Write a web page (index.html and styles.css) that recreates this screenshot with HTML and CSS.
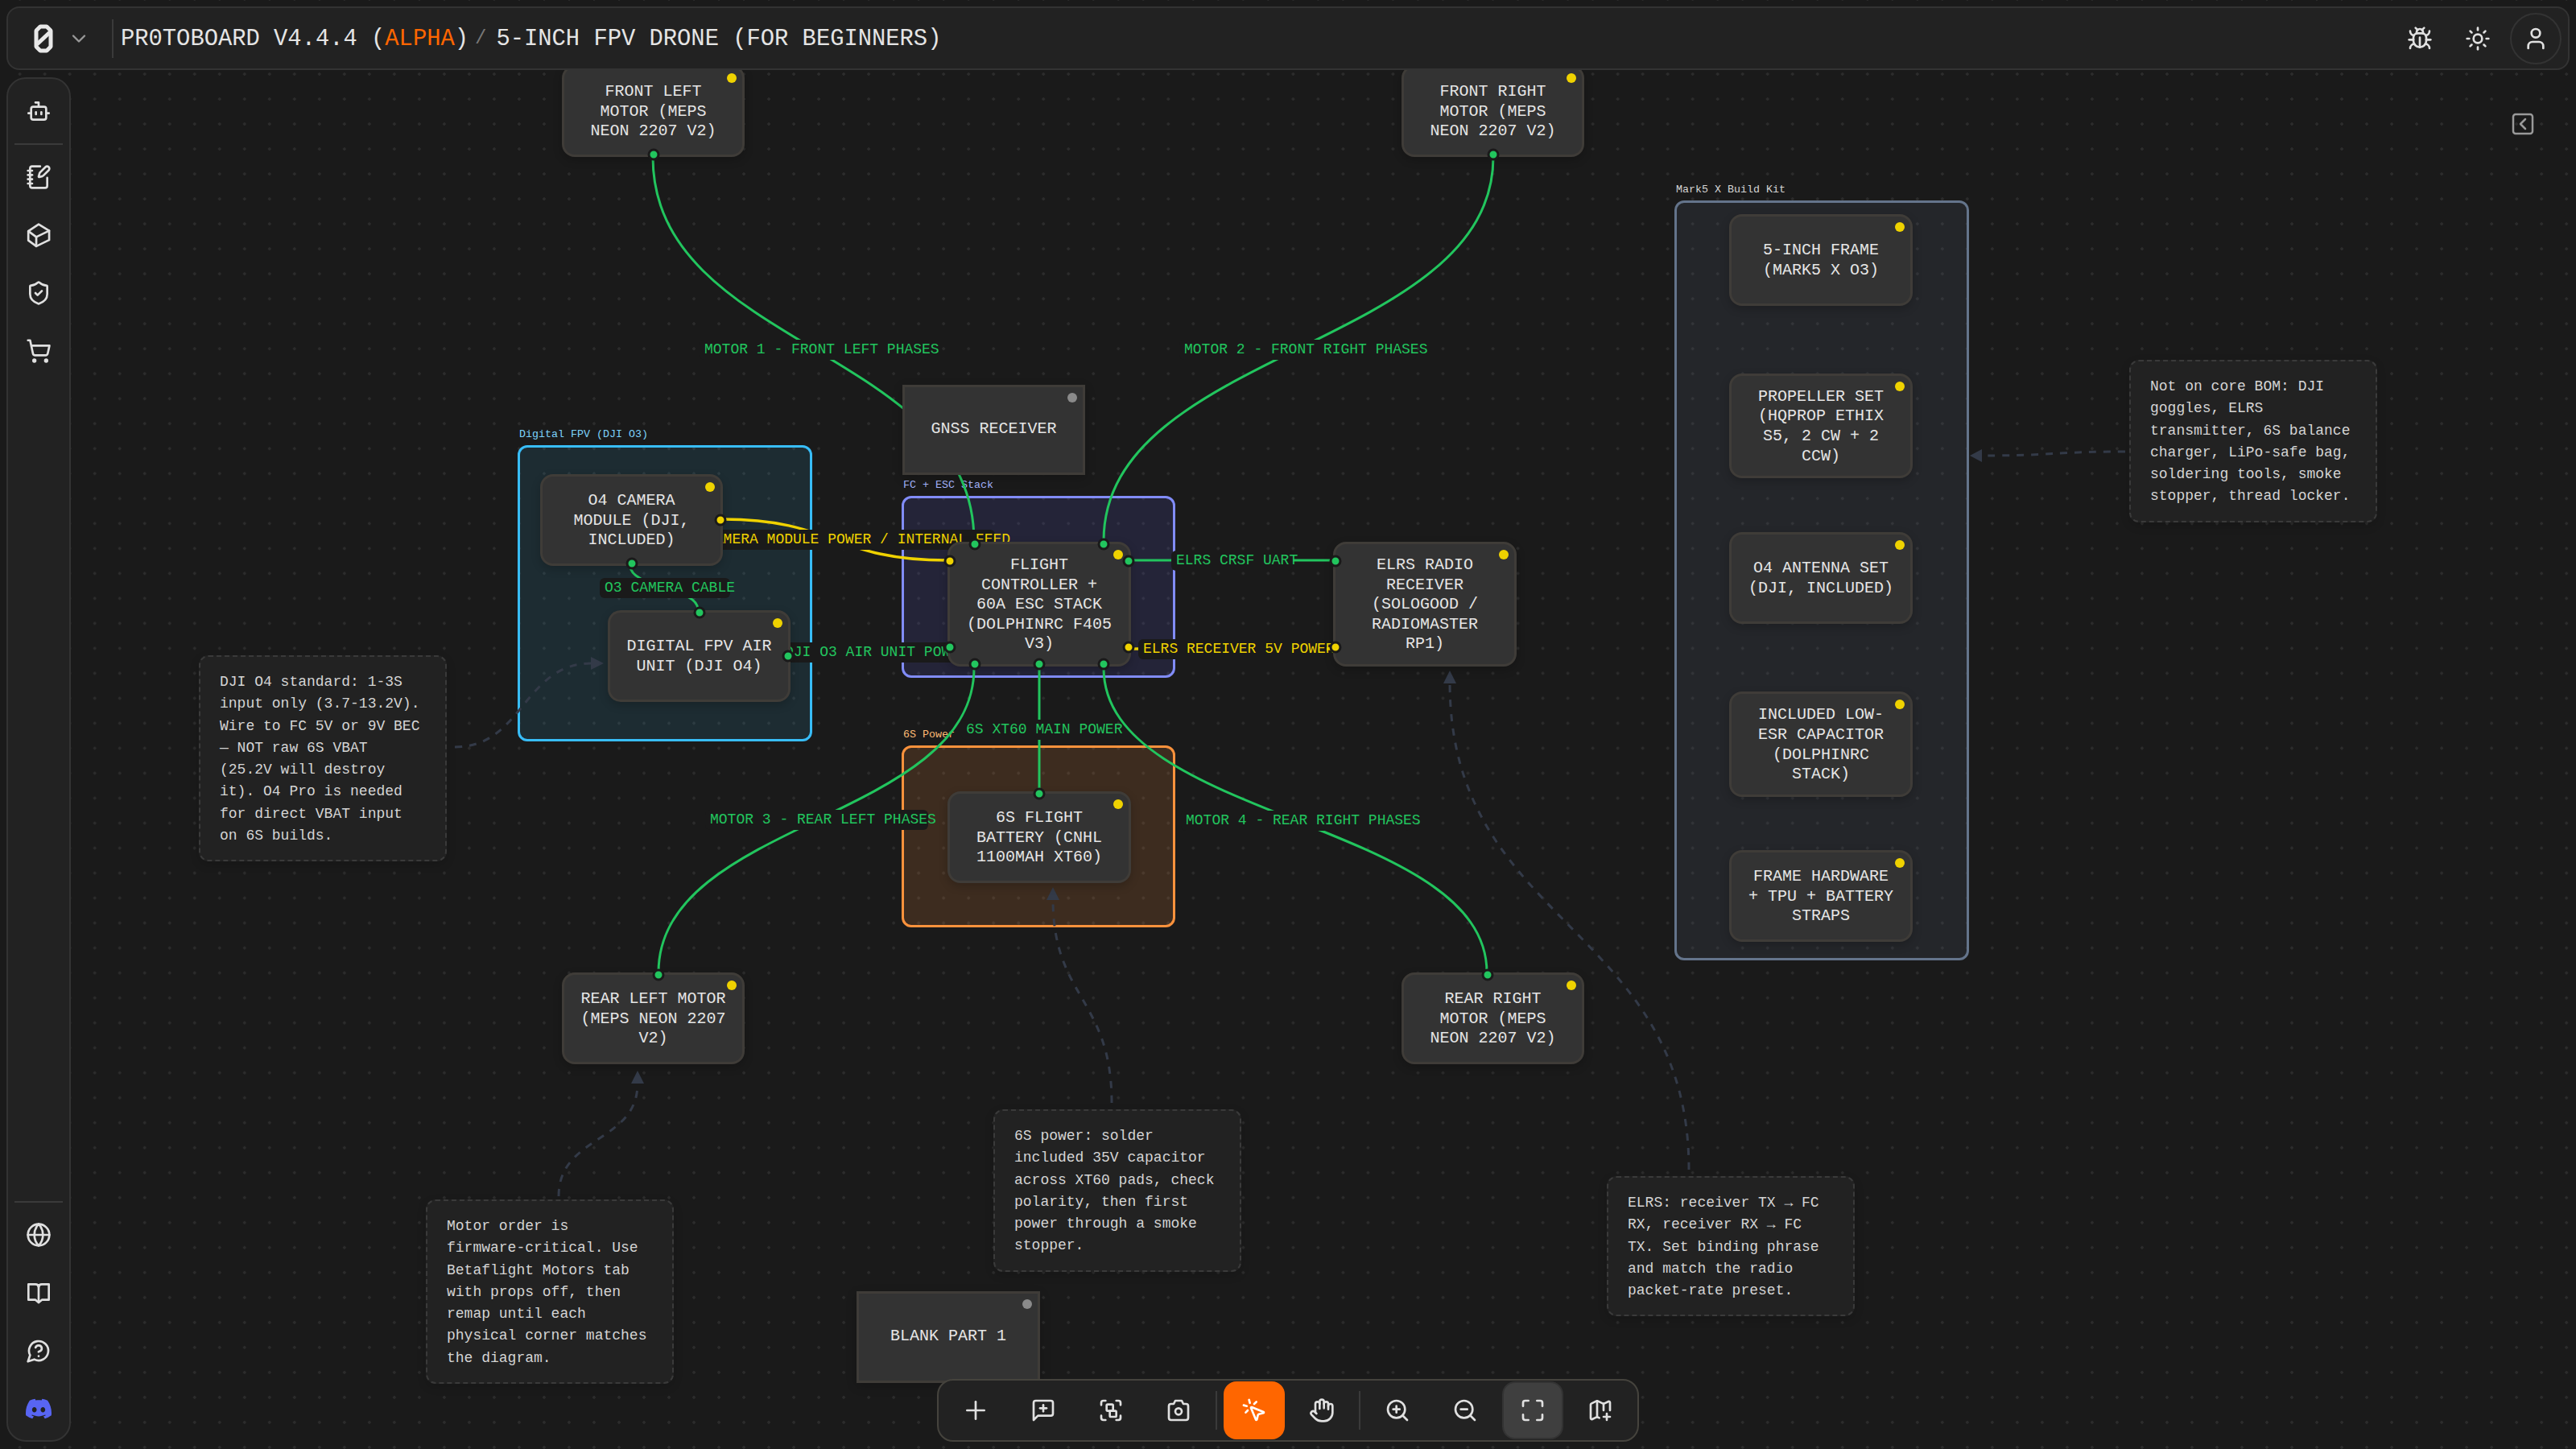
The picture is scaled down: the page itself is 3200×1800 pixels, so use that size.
FILE: index.html
```html
<!DOCTYPE html>
<html lang="en">
<head>
    <meta charset="UTF-8">
    <title>PR0TOBOARD - 5-inch FPV Drone</title>
    <link rel="stylesheet" href="styles.css">
</head>
<body>
<div class="app">
    <main class="canvas">
        <!-- groups -->
        <section class="group group-fpv"><span class="group-label">Digital FPV (DJI O3)</span></section>
        <section class="group group-fc"><span class="group-label">FC + ESC Stack</span></section>
        <section class="group group-power"><span class="group-label">6S Power</span></section>
        <section class="group group-kit"><span class="group-label">Mark5 X Build Kit</span></section>

        <!-- edges -->
        <svg class="edges" viewBox="0 0 3200 1800">
            <g class="edge-green">
                <path d="M811 195C811 433 1210 433 1210 672"/>
                <path d="M1855 195C1855 433 1371 433 1371 672"/>
                <path d="M1210 830C1210 1019 818 1019 818 1208"/>
                <path d="M1371 830C1371 1019 1847 1019 1847 1208"/>
                <path d="M1291 830V982"/>
                <path d="M783 703C783 730 867 730 867 757"/>
                <path d="M982 814C1080 814 1080 806 1177 806"/>
                <path d="M1405 696H1656"/>
            </g>
            <g class="edge-yellow">
                <path d="M898 645C1036 645 1036 696 1177 696"/>
                <path d="M1405 806H1656"/>
            </g>
            <g class="edge-note">
                <path d="M565 928C650 928 650 824 735 824"/>
                <path d="M2640 561C2550 561 2550 566 2462 566"/>
                <path d="M1381 1370C1381 1240 1308 1240 1308 1117"/>
                <path d="M694 1486C694 1410 792 1420 792 1346"/>
                <path d="M2098 1453C2098 1150 1801 1150 1801 848"/>
            </g>
            <g class="edge-arrow">
                <polygon points="750,824 734,816 734,832"/>
                <polygon points="2447,566 2462,558 2462,574"/>
                <polygon points="1308,1102 1300,1118 1316,1118"/>
                <polygon points="792,1330 784,1346 800,1346"/>
                <polygon points="1801,833 1793,849 1809,849"/>
            </g>
        </svg>

        <!-- edge labels -->
        <div class="edge-label green lbl-m1">MOTOR 1 - FRONT LEFT PHASES</div>
        <div class="edge-label green lbl-m2">MOTOR 2 - FRONT RIGHT PHASES</div>
        <div class="edge-label green lbl-m3">MOTOR 3 - REAR LEFT PHASES</div>
        <div class="edge-label green lbl-m4">MOTOR 4 - REAR RIGHT PHASES</div>
        <div class="edge-label green lbl-xt60">6S XT60 MAIN POWER</div>
        <div class="edge-label green lbl-crsf">ELRS CRSF UART</div>
        <div class="edge-label green lbl-cable">O3 CAMERA CABLE</div>
        <div class="edge-label green lbl-air">DJI O3 AIR UNIT POWER</div>
        <div class="edge-label yellow lbl-rx5v">ELRS RECEIVER 5V POWER</div>
        <div class="edge-label yellow lbl-cam">CAMERA MODULE POWER / INTERNAL FEED</div>

        <!-- nodes -->
        <div class="node n-fl"><span class="dot"></span>FRONT LEFT MOTOR (MEPS NEON 2207 V2)
            <i class="handle h-bottom"></i></div>
        <div class="node n-fr"><span class="dot"></span>FRONT RIGHT MOTOR (MEPS NEON 2207 V2)
            <i class="handle h-bottom"></i></div>
        <div class="node square n-gnss"><span class="dot off"></span>GNSS RECEIVER</div>
        <div class="node n-cam"><span class="dot"></span>O4 CAMERA MODULE (DJI, INCLUDED)
            <i class="handle h-right yellow"></i>
            <i class="handle h-bottom"></i></div>
        <div class="node n-air"><span class="dot"></span>DIGITAL FPV AIR UNIT (DJI O4)
            <i class="handle h-top"></i>
            <i class="handle h-right"></i></div>
        <div class="node n-fc"><span class="dot"></span>FLIGHT CONTROLLER + 60A ESC STACK (DOLPHINRC F405 V3)
            <i class="handle h-top at-x14"></i>
            <i class="handle h-top at-x86"></i>
            <i class="handle h-left at-y14 yellow"></i>
            <i class="handle h-left at-y86"></i>
            <i class="handle h-right at-y14"></i>
            <i class="handle h-right at-y86 yellow"></i>
            <i class="handle h-bottom at-x14"></i>
            <i class="handle h-bottom"></i>
            <i class="handle h-bottom at-x86"></i></div>
        <div class="node n-elrs"><span class="dot"></span>ELRS RADIO RECEIVER (SOLOGOOD / RADIOMASTER RP1)
            <i class="handle h-left at-y14"></i>
            <i class="handle h-left at-y86 yellow"></i></div>
        <div class="node n-batt"><span class="dot"></span>6S FLIGHT BATTERY (CNHL 1100MAH XT60)
            <i class="handle h-top"></i></div>
        <div class="node n-rl"><span class="dot"></span>REAR LEFT MOTOR (MEPS NEON 2207 V2)
            <i class="handle h-top at-x53"></i></div>
        <div class="node n-rr"><span class="dot"></span>REAR RIGHT MOTOR (MEPS NEON 2207 V2)
            <i class="handle h-top at-x47"></i></div>
        <div class="node square n-blank"><span class="dot off"></span>BLANK PART 1</div>

        <div class="node n-frame"><span class="dot"></span>5-INCH FRAME (MARK5 X O3)</div>
        <div class="node n-props"><span class="dot"></span>PROPELLER SET (HQPROP ETHIX S5, 2 CW + 2 CCW)</div>
        <div class="node n-ant"><span class="dot"></span>O4 ANTENNA SET (DJI, INCLUDED)</div>
        <div class="node n-cap"><span class="dot"></span>INCLUDED LOW-ESR CAPACITOR (DOLPHINRC STACK)</div>
        <div class="node n-hw"><span class="dot"></span>FRAME HARDWARE + TPU + BATTERY STRAPS</div>

        <!-- notes -->
        <div class="note note-o4">DJI O4 standard: 1-3S input only (3.7-13.2V). Wire to FC 5V or 9V BEC — NOT raw 6S VBAT (25.2V will destroy it). O4 Pro is needed for direct VBAT input on 6S builds.</div>
        <div class="note note-bom">Not on core BOM: DJI goggles, ELRS transmitter, 6S balance charger, LiPo-safe bag, soldering tools, smoke stopper, thread locker.</div>
        <div class="note note-motor">Motor order is firmware-critical. Use Betaflight Motors tab with props off, then remap until each physical corner matches the diagram.</div>
        <div class="note note-power">6S power: solder included 35V capacitor across XT60 pads, check polarity, then first power through a smoke stopper.</div>
        <div class="note note-elrs">ELRS: receiver TX → FC RX, receiver RX → FC TX. Set binding phrase and match the radio packet-rate preset.</div>
    </main>

    <div class="chrome">
        <header class="topbar">
            <svg class="logo" viewBox="0 0 24 36"><path d="M8 3h8l5 5v20l-5 5H8l-5-5V8z"/><path d="M4 25 20 10"/></svg>
            <svg class="icon chevron" viewBox="0 0 24 24"><path d="m6 9 6 6 6-6"/></svg>
            <span class="topbar-sep"></span>
            <span class="title">PR0TOBOARD V4.4.4 (<span class="alpha">ALPHA</span>)</span>
            <span class="crumb-slash">/</span>
            <span class="title">5-INCH FPV DRONE (FOR BEGINNERS)</span>
            <div class="topbar-actions">
                <button class="tool">
                    <svg class="icon" viewBox="0 0 24 24"><path d="m8 2 1.88 1.88"/><path d="M14.12 3.88 16 2"/><path d="M9 7.13v-1a3.003 3.003 0 1 1 6 0v1"/><path d="M12 20c-3.3 0-6-2.7-6-6v-3a4 4 0 0 1 4-4h4a4 4 0 0 1 4 4v3c0 3.3-2.7 6-6 6"/><path d="M12 20v-9"/><path d="M6.53 9C4.6 8.8 3 7.1 3 5"/><path d="M6 13H2"/><path d="M3 21c0-2.1 1.7-3.9 3.8-4"/><path d="M20.97 5c0 2.1-1.6 3.8-3.5 4"/><path d="M22 13h-4"/><path d="M17.2 17c2.1.1 3.8 1.9 3.8 4"/></svg>
                </button>
                <button class="tool">
                    <svg class="icon" viewBox="0 0 24 24"><circle cx="12" cy="12" r="4"/><path d="M12 2v2"/><path d="M12 20v2"/><path d="m4.93 4.93 1.41 1.41"/><path d="m17.66 17.66 1.41 1.41"/><path d="M2 12h2"/><path d="M20 12h2"/><path d="m6.34 17.66-1.41 1.41"/><path d="m19.07 4.93-1.41 1.41"/></svg>
                </button>
                <button class="tool avatar">
                    <svg class="icon" viewBox="0 0 24 24"><path d="M19 21v-2a4 4 0 0 0-4-4H9a4 4 0 0 0-4 4v2"/><circle cx="12" cy="7" r="4"/></svg>
                </button>
            </div>
        </header>

        <div class="stage">
            <nav class="sidebar">
                <button class="tool">
                    <svg class="icon" viewBox="0 0 24 24"><path d="M12 8V4H9"/><rect x="5" y="8" width="14" height="12" rx="2"/><path d="M2.5 14H5"/><path d="M19 14h2.5"/><path d="M9.5 13v2"/><path d="M14.5 13v2"/></svg>
                </button>
                <hr class="side-sep">
                <button class="tool">
                    <svg class="icon" viewBox="0 0 24 24"><path d="M13.4 2H6a2 2 0 0 0-2 2v16a2 2 0 0 0 2 2h12a2 2 0 0 0 2-2v-7.4"/><path d="M2 6h4"/><path d="M2 10h4"/><path d="M2 14h4"/><path d="M2 18h4"/><path d="M21.378 5.626a1 1 0 1 0-3.004-3.004l-5.01 5.012a2 2 0 0 0-.506.854l-.837 2.87a.5.5 0 0 0 .62.62l2.87-.837a2 2 0 0 0 .854-.506z"/></svg>
                </button>
                <button class="tool">
                    <svg class="icon" viewBox="0 0 24 24"><path d="M12 2 21.8 8v8.6L9.8 22.4 2.4 17V8.4z"/><path d="M2.4 8.4 9.8 13.8 21.8 8"/><path d="M9.8 13.8v8.6"/></svg>
                </button>
                <button class="tool">
                    <svg class="icon" viewBox="0 0 24 24"><path d="M20 13c0 5-3.5 7.5-7.66 8.95a1 1 0 0 1-.67-.01C7.5 20.5 4 18 4 13V6a1 1 0 0 1 1-1c2 0 4.5-1.2 6.24-2.72a1.17 1.17 0 0 1 1.52 0C14.51 3.81 17 5 19 5a1 1 0 0 1 1 1z"/><path d="m9 12 2 2 4-4"/></svg>
                </button>
                <button class="tool">
                    <svg class="icon" viewBox="0 0 24 24"><circle cx="8" cy="21" r="1"/><circle cx="19" cy="21" r="1"/><path d="M2.05 2.05h2l2.66 12.42a2 2 0 0 0 2 1.58h9.78a2 2 0 0 0 1.95-1.57l1.65-7.43H5.12"/></svg>
                </button>
                <hr class="side-sep side-sep-bottom">
                <button class="tool">
                    <svg class="icon" viewBox="0 0 24 24"><circle cx="12" cy="12" r="10"/><path d="M12 2a14.5 14.5 0 0 0 0 20 14.5 14.5 0 0 0 0-20"/><path d="M2 12h20"/></svg>
                </button>
                <button class="tool">
                    <svg class="icon" viewBox="0 0 24 24"><path d="M2.5 4H9a3 3 0 0 1 3 2.5A3 3 0 0 1 15 4h6.5v14.5H15L12 21l-3-2.5H2.5z"/><path d="M12 6.5V21"/></svg>
                </button>
                <button class="tool">
                    <svg class="icon" viewBox="0 0 24 24"><path d="M7.9 20A9 9 0 1 0 4 16.1L2 22Z"/><path d="M9.09 9a3 3 0 0 1 5.83 1c0 2-3 3-3 3"/><path d="M12 17h.01"/></svg>
                </button>
                <button class="tool">
                    <svg class="icon discord" viewBox="0 0 24 24"><path d="M20.317 4.3698a19.7913 19.7913 0 00-4.8851-1.5152.0741.0741 0 00-.0785.0371c-.211.3753-.4447.8648-.6083 1.2495-1.8447-.2762-3.68-.2762-5.4868 0-.1636-.3933-.4058-.8742-.6177-1.2495a.077.077 0 00-.0785-.037 19.7363 19.7363 0 00-4.8852 1.515.0699.0699 0 00-.0321.0277C.5334 9.0458-.319 13.5799.0992 18.0578a.0824.0824 0 00.0312.0561c2.0528 1.5076 4.0413 2.4228 5.9929 3.0294a.0777.0777 0 00.0842-.0276c.4616-.6304.8731-1.2952 1.226-1.9942a.076.076 0 00-.0416-.1057c-.6528-.2476-1.2743-.5495-1.8722-.8923a.077.077 0 01-.0076-.1277c.1258-.0943.2517-.1923.3718-.2914a.0743.0743 0 01.0776-.0105c3.9278 1.7933 8.18 1.7933 12.0614 0a.0739.0739 0 01.0785.0095c.1202.099.246.1981.3728.2924a.077.077 0 01-.0066.1276 12.2986 12.2986 0 01-1.873.8914.0766.0766 0 00-.0407.1067c.3604.698.7719 1.3628 1.225 1.9932a.076.076 0 00.0842.0286c1.961-.6067 3.9495-1.5219 6.0023-3.0294a.077.077 0 00.0313-.0552c.5004-5.177-.8382-9.6739-3.5485-13.6604a.061.061 0 00-.0312-.0286zM8.02 15.3312c-1.1825 0-2.1569-1.0857-2.1569-2.419 0-1.3332.9555-2.4189 2.157-2.4189 1.2108 0 2.1757 1.0952 2.1568 2.419 0 1.3332-.9555 2.4189-2.1569 2.4189zm7.9748 0c-1.1825 0-2.1569-1.0857-2.1569-2.419 0-1.3332.9554-2.4189 2.1569-2.4189 1.2108 0 2.1757 1.0952 2.1568 2.419 0 1.3332-.946 2.4189-2.1568 2.4189Z"/></svg>
                </button>
            </nav>
            <button class="collapse">
                <svg viewBox="0 0 28 28"><rect x="2" y="2" width="24" height="24" rx="3"/><path d="m17 8-6 6 6 6"/></svg>
            </button>
        </div>
    </div>

    <div class="toolbar">
        <button class="tool">
            <svg class="icon" viewBox="0 0 24 24"><path d="M12 4v16"/><path d="M4 12h16"/></svg>
        </button>
        <button class="tool">
            <svg class="icon" viewBox="0 0 24 24"><path d="M21 15a2 2 0 0 1-2 2H7l-4 4V5a2 2 0 0 1 2-2h14a2 2 0 0 1 2 2z"/><path d="M12 7v6"/><path d="M9 10h6"/></svg>
        </button>
        <button class="tool">
            <svg class="icon" viewBox="0 0 24 24"><path d="M7 3H5a2 2 0 0 0-2 2v2"/><path d="M17 3h2a2 2 0 0 1 2 2v2"/><path d="M7 21H5a2 2 0 0 1-2-2v-2"/><path d="M17 21h2a2 2 0 0 0 2-2v-2"/><rect x="8" y="6.5" width="6" height="6" rx="1"/><rect x="11" y="12.5" width="6" height="5.5" rx="1"/></svg>
        </button>
        <button class="tool">
            <svg class="icon" viewBox="0 0 24 24"><path d="M15 3H9L7.5 6H5a2 2 0 0 0-2 2v11a2 2 0 0 0 2 2h14a2 2 0 0 0 2-2V8a2 2 0 0 0-2-2h-2.500z"/><circle cx="12" cy="13" r="3"/></svg>
        </button>
        <span class="tool-sep"></span>
        <button class="tool active">
            <svg class="icon" viewBox="0 0 24 24"><path d="M14 4.100 12 6"/><path d="m5.100 8-2.900-.8"/><path d="m6 12-1.900 2"/><path d="M7.200 2.200 8 5.100"/><path d="M9.037 9.690a.498.498 0 0 1 .653-.653l11 4.500a.5.5 0 0 1-.074.949l-4.349 1.041a1 1 0 0 0-.74.739l-1.040 4.350a.5.5 0 0 1-.95.074z"/></svg>
        </button>
        <button class="tool">
            <svg class="icon" viewBox="0 0 24 24"><path d="M18 11V6a2 2 0 0 0-2-2 2 2 0 0 0-2 2"/><path d="M14 10V4a2 2 0 0 0-2-2 2 2 0 0 0-2 2v2"/><path d="M10 10.500V6a2 2 0 0 0-2-2 2 2 0 0 0-2 2v8"/><path d="M18 8a2 2 0 1 1 4 0v6a8 8 0 0 1-8 8h-2c-2.800 0-4.500-.86-5.990-2.340l-3.600-3.600a2 2 0 0 1 2.830-2.820L7 15"/></svg>
        </button>
        <span class="tool-sep"></span>
        <button class="tool">
            <svg class="icon" viewBox="0 0 24 24"><circle cx="11" cy="11" r="8"/><path d="m21 21-4.300-4.300"/><path d="M11 8v6"/><path d="M8 11h6"/></svg>
        </button>
        <button class="tool">
            <svg class="icon" viewBox="0 0 24 24"><circle cx="11" cy="11" r="8"/><path d="m21 21-4.300-4.300"/><path d="M8 11h6"/></svg>
        </button>
        <button class="tool selected">
            <svg class="icon" viewBox="0 0 24 24"><path d="M8 3H5a2 2 0 0 0-2 2v3"/><path d="M21 8V5a2 2 0 0 0-2-2h-3"/><path d="M3 16v3a2 2 0 0 0 2 2h3"/><path d="M16 21h3a2 2 0 0 0 2-2v-3"/></svg>
        </button>
        <button class="tool">
            <svg class="icon" viewBox="0 0 24 24"><path d="m11 19-1.106-.552a2 2 0 0 0-1.788 0l-3.659 1.830A1 1 0 0 1 3 19.381V6.618a1 1 0 0 1 .553-.894l4.553-2.277a2 2 0 0 1 1.788 0l4.212 2.106a2 2 0 0 0 1.788 0l3.659-1.830A1 1 0 0 1 21 4.619V12"/><path d="M15 5.764V12"/><path d="M18 15v6"/><path d="M21 18h-6"/><path d="M9 3.236v15"/></svg>
        </button>
    </div>
</div>
</body>
</html>
```

FILE: styles.css
```css
* {
    box-sizing: border-box;
}

body {
    margin: 0;
    overflow: hidden;
    background-color: #1a1a1a;
    font-family: "Liberation Mono", monospace;
    color: #e5e5e5;
}

button {
    padding: 0;
    border: none;
    background: none;
    color: inherit;
    font: inherit;
}

.app {
    position: relative;
    width: 3200px;
    height: 1800px;
    overflow: hidden;
}

/* icons */
.icon {
    width: 32px;
    height: 32px;
    fill: none;
    stroke: #e0e0e0;
    stroke-width: 2;
    stroke-linecap: round;
    stroke-linejoin: round;
}

.icon.discord {
    fill: #5865f2;
    stroke: none;
}

.tool {
    display: flex;
    flex: none;
    align-items: center;
    justify-content: center;
    width: 64px;
    height: 64px;
    border-radius: 16px;
}

/* canvas */
.canvas {
    position: absolute;
    inset: 0;
    background-color: #1a1a1a;
    background-image: radial-gradient(circle, #2c2c2c 1.5px, transparent 2px);
    background-size: 31.017px 31.017px;
    background-position: 9.1px 14.5px;
}

.edges {
    position: absolute;
    inset: 0;
    z-index: 2;
    width: 3200px;
    height: 1800px;
    fill: none;
}

.edge-green {
    stroke: #22c55e;
    stroke-width: 3;
}

.edge-yellow {
    stroke: #efd200;
    stroke-width: 3.5;
}

.edge-note {
    stroke: #333a48;
    stroke-width: 3;
    stroke-dasharray: 9 9;
}

.edge-arrow {
    fill: #333a48;
}

/* groups */
.group {
    position: absolute;
    z-index: 1;
    border: 3px solid;
    border-radius: 12px;
}

.group-label {
    position: absolute;
    top: -25px;
    left: -1px;
    font-size: 13.33px;
    line-height: 18px;
    white-space: nowrap;
}

.group-fpv {
    left: 643px;
    top: 553px;
    width: 366px;
    height: 368px;
    border-color: #38bdf8;
    background-color: rgba(56, 189, 248, 0.11);
}

.group-fpv .group-label {
    color: #7dd3fc;
}

.group-fc {
    left: 1120px;
    top: 616px;
    width: 340px;
    height: 226px;
    border-color: #818cf8;
    background-color: rgba(99, 102, 241, 0.14);
}

.group-fc .group-label {
    color: #a5b4fc;
}

.group-power {
    left: 1120px;
    top: 926px;
    width: 340px;
    height: 226px;
    border-color: #fb923c;
    background-color: rgba(251, 146, 60, 0.16);
}

.group-power .group-label {
    color: #fdba74;
}

.group-kit {
    left: 2080px;
    top: 249px;
    width: 366px;
    height: 944px;
    border-color: #64748b;
    background-color: rgba(100, 116, 139, 0.14);
}

.group-kit .group-label {
    color: #d4d4d4;
}

/* edge labels */
.edge-label {
    position: absolute;
    z-index: 3;
    height: 25px;
    padding: 0 6px;
    border-radius: 6px;
    background-color: #1a1a1a;
    font-size: 18px;
    line-height: 25px;
    white-space: nowrap;
}

.edge-label.green {
    color: #22c55e;
}

.edge-label.yellow {
    color: #efd200;
}

.lbl-m1 { left: 869px; top: 422px; width: 285px; }
.lbl-m2 { left: 1465px; top: 422px; width: 295px; }
.lbl-m3 { left: 876px; top: 1006px; width: 277px; }
.lbl-m4 { left: 1467px; top: 1007px; width: 285px; }
.lbl-xt60 { left: 1194px; top: 894px; width: 194px; }
.lbl-crsf { left: 1455px; top: 684px; width: 151px; }
.lbl-cable { left: 745px; top: 718px; width: 162px; }
.lbl-air { left: 969px; top: 798px; width: 224px; }
.lbl-rx5v { left: 1414px; top: 794px; width: 234px; }
.lbl-cam { left: 871px; top: 658px; width: 365px; }

/* nodes */
.node {
    position: absolute;
    z-index: 4;
    display: flex;
    align-items: center;
    justify-content: center;
    width: 227px;
    height: 114px;
    padding: 2px 20px 0;
    border: 3px solid #3f3c38;
    border-radius: 16px;
    background-color: #333;
    box-shadow: 0 4px 12px rgba(0, 0, 0, 0.2);
    font-size: 20px;
    line-height: 24.6px;
    text-align: center;
}

.node.square {
    border-radius: 0;
    padding: 0 20px 2px;
}

.dot {
    position: absolute;
    top: 7px;
    right: 7px;
    width: 12px;
    height: 12px;
    border-radius: 50%;
    background-color: #efd200;
}

.dot.off {
    background-color: #8a8a8a;
}

.handle {
    position: absolute;
    left: var(--x, 50%);
    top: var(--y, 50%);
    width: 15px;
    height: 15px;
    border: 3px solid #1a1a1a;
    border-radius: 50%;
    background-color: #22c55e;
    transform: translate(-50%, -50%);
}

.handle.yellow {
    background-color: #efd200;
}

.h-top { --y: 0%; }
.h-bottom { --y: 100%; }
.h-left { --x: 0%; }
.h-right { --x: 100%; }
.at-x14 { --x: 14%; }
.at-x86 { --x: 86%; }
.at-x53 { --x: 53%; }
.at-x47 { --x: 47%; }
.at-y14 { --y: 14%; }
.at-y86 { --y: 86%; }

.n-fl { left: 698px; top: 81px; }
.n-fr { left: 1741px; top: 81px; }
.n-gnss { left: 1121px; top: 478px; height: 112px; }
.n-cam { left: 671px; top: 589px; }
.n-air { left: 755px; top: 758px; }
.n-fc { left: 1177px; top: 673px; width: 228px; height: 155px; }
.n-elrs { left: 1656px; top: 673px; width: 228px; height: 155px; }
.n-batt { left: 1177px; top: 983px; width: 228px; }
.n-rl { left: 698px; top: 1208px; }
.n-rr { left: 1741px; top: 1208px; }
.n-blank { left: 1064px; top: 1604px; width: 228px; }
.n-frame { left: 2148px; top: 266px; width: 228px; }
.n-props { left: 2148px; top: 464px; width: 228px; height: 130px; }
.n-ant { left: 2148px; top: 661px; width: 228px; }
.n-cap { left: 2148px; top: 859px; width: 228px; height: 131px; }
.n-hw { left: 2148px; top: 1056px; width: 228px; }

/* notes */
.note {
    position: absolute;
    z-index: 4;
    width: 308px;
    padding: 18px 24px 16px;
    border: 2px dashed #3a3a3a;
    border-radius: 12px;
    background-color: #222;
    box-shadow: 0 4px 12px rgba(0, 0, 0, 0.15);
    color: #d4d4d4;
    font-size: 18px;
    line-height: 27.3px;
}

.note-o4 { left: 247px; top: 814px; }
.note-bom { left: 2645px; top: 447px; }
.note-motor { left: 529px; top: 1490px; }
.note-power { left: 1234px; top: 1378px; }
.note-elrs { left: 1996px; top: 1461px; }

/* window chrome */
.chrome {
    position: relative;
    z-index: 5;
    display: grid;
    grid-template-rows: 79px 1fr;
    gap: 9px;
    height: 1800px;
    padding: 8px 8px 9px;
}

.topbar {
    display: flex;
    align-items: center;
    padding: 0 8px 0 32px;
    border: 2px solid #333;
    border-radius: 16px;
    background-color: #222;
}

.logo {
    width: 24px;
    height: 36px;
    fill: none;
    stroke: #e8e8e8;
    stroke-width: 5;
    stroke-linejoin: bevel;
}

.chevron {
    width: 28px;
    height: 28px;
    margin-left: 18px;
    stroke: #999;
}

.topbar-sep {
    width: 2px;
    height: 48px;
    margin: 0 9px 0 27px;
    background-color: #3a3a3a;
}

.title {
    padding-top: 2px;
    font-size: 28.8px;
    color: #e5e5e5;
    white-space: nowrap;
}

.alpha {
    color: #ff6600;
}

.crumb-slash {
    margin: 0 12px 0 8px;
    font-size: 24px;
    color: #777;
}

.topbar-actions {
    display: flex;
    gap: 8px;
    margin-left: auto;
}

.avatar {
    border: 2px solid #333;
    border-radius: 50%;
}

.stage {
    display: flex;
    justify-content: space-between;
    min-height: 0;
}

.sidebar {
    display: flex;
    flex-direction: column;
    align-items: center;
    gap: 8px;
    width: 80px;
    padding: 8px 0 7px;
    border: 2px solid #333;
    border-radius: 24px;
    background-color: #222;
}

.side-sep {
    flex: none;
    width: 60px;
    height: 2px;
    margin: 0;
    border: none;
    background-color: #3a3a3a;
}

.side-sep-bottom {
    margin-top: auto;
}

.collapse {
    align-self: flex-start;
    width: 28px;
    height: 28px;
    margin: 44px 44px 0 0;
}

.collapse svg {
    display: block;
    width: 28px;
    height: 28px;
    fill: none;
    stroke: #999;
    stroke-width: 2.5;
    stroke-linecap: round;
    stroke-linejoin: round;
}

.toolbar {
    position: absolute;
    z-index: 6;
    left: 50%;
    bottom: 9px;
    display: flex;
    align-items: center;
    gap: 8px;
    padding: 1px 8px;
    border: 2px solid #45433d;
    border-radius: 20px;
    background-color: #222;
    transform: translateX(-50%);
}

.toolbar .tool {
    width: 76px;
    height: 72px;
    border-radius: 16px;
}

.toolbar .tool.active {
    background-color: #ff6600;
}

.toolbar .tool.active .icon {
    stroke: #fff;
}

.toolbar .tool.selected {
    border: 2px solid #333;
    background-color: #3f3f3f;
}

.tool-sep {
    flex: none;
    width: 2px;
    height: 48px;
    background-color: #3a3a3a;
}
```
